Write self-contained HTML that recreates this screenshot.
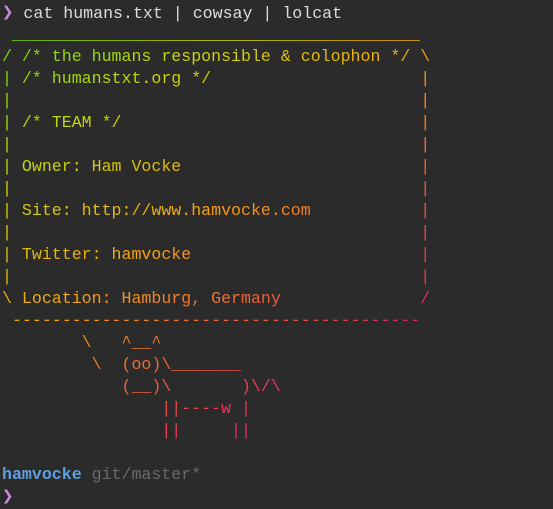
<!DOCTYPE html>
<html><head><meta charset="utf-8"><style>
html,body{margin:0;padding:0;background:#2b2b2b;width:553px;height:508px;overflow:hidden}
pre{margin:0;font-family:"Liberation Mono","DejaVu Sans Mono",monospace;font-size:16.6px;line-height:22px;white-space:pre;position:absolute;left:2px}
#p{top:2px;color:#dcdcdc}
.ch{color:#c88ad8;font-size:19px}
#l{top:24px;background:linear-gradient(145deg,hsl(95,90%,45%) 0%,hsl(65,90%,45%) 22%,hsl(38,95%,52%) 45%,hsl(10,80%,58%) 65%,hsl(335,85%,50%) 85%,hsl(320,90%,48%) 100%);-webkit-background-clip:text;background-clip:text;color:transparent;width:440px}
#b{top:464px;color:#dcdcdc}
.u{color:#5f9fdf;font-weight:bold}
.g{color:#6a6a6a}
</style></head><body>
<pre id="p"><span class="ch">❯</span> cat humans.txt | cowsay | lolcat</pre>
<pre id="l"> _________________________________________
/ /* the humans responsible &amp; colophon */ \
| /* humanstxt.org */                     |
|                                         |
| /* TEAM */                              |
|                                         |
| Owner: Ham Vocke                        |
|                                         |
| Site: http://www.hamvocke.com           |
|                                         |
| Twitter: hamvocke                       |
|                                         |
\ Location: Hamburg, Germany              /
 -----------------------------------------
        \   ^__^
         \  (oo)\_______
            (__)\       )\/\
                ||----w |
                ||     ||</pre>
<pre id="b"><span class="u">hamvocke</span> <span class="g">git/master*</span>
<span class="ch">❯</span></pre>
</body></html>
